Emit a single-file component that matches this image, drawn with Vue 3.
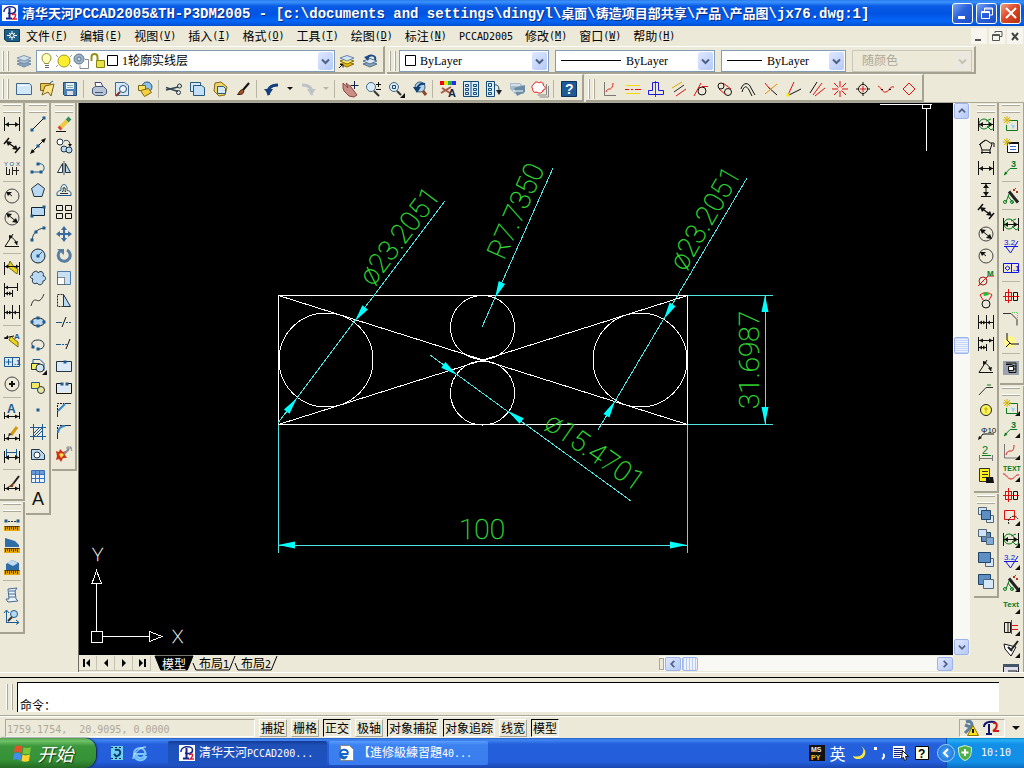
<script setup>
import { h } from 'vue'

// ---- small helpers for building icon markup ----
const s = (d, c = '#111', w = 1) => `<path d="${d}" fill="none" stroke="${c}" stroke-width="${w}"/>`
const f = (d, c = '#111') => `<path d="${d}" fill="${c}"/>`
const o = (d, fill, c = '#111') => `<path d="${d}" fill="${fill}" stroke="${c}"/>`
const dash = (markup, pattern = '2 1') => markup.replace('/>', ` stroke-dasharray="${pattern}"/>`)
const ci = (x, y, r, c = '#111', fill = 'none') => `<circle cx="${x}" cy="${y}" r="${r}" stroke="${c}" fill="${fill}"/>`
const el = (x, y, rx, ry, c, fill = 'none') => `<ellipse cx="${x}" cy="${y}" rx="${rx}" ry="${ry}" stroke="${c}" fill="${fill}"/>`
const tx = (x, y, z, t, c, w = 400) => `<text x="${x}" y="${y}" font-size="${z}" fill="${c}" font-weight="${w}" font-family="Liberation Sans, sans-serif">${t}</text>`
const B = '#1d5a92'
const L = '#b9d8f2'
const G = '#0a7a1e'
const R = '#e01010'
const corner = f('M17 12v5h-5z')
const dot = (x, y, c = B) => f(`M${x - 1.5} ${y - 1.5}h3v3h-3z`, c)
const dimH = (y = 8) => s(`M.5 1v14M15.500 1v14M1 ${y}.5h14`) + f(`M1 ${y}.5l4-2.500v5zM15 ${y}.5l-4-2.500v5z`)
const ruler = f('M0 11h16v5H0z', '#e5a80c') + s('M.5 11.500h15M1.500 12v3M3.500 12v2M5.500 12v3M7.500 12v2M9.500 12v3M11.500 12v2M13.500 12v3', '#5a3c00')
const leader3 = s('M1 15L7 8.500H14', G) + f('M1 15.500l1-4 2.500 2z', G) + tx(8, 7, 9, '3', G, 700)
const balloonDim = ci(6, 8, 5, G) + s('M.5 2v13M15.500 2v13M1 8.500h14') + s('M9 10l4 4 3-2M8 5l5-2', G) + f('M1 8.500l4-2.500v5zM15 8.500l-4-2.500v5z')
const rough = tx(1, 7, 8, '3.2', '#1414e0') + s('M1 8.500h14M3 9l4.500 6L15 3', '#1414e0')
const wand = s('M6 3.500l9 11', '#222', 3) + s('M6 6l-3 8M5 8l5 7', G) + ci(2, 14, 1.5, G) + ci(9, 14, 1.5, G) + f('M10 1h2v2h-2zM13 3h2v2h-2zM12 0h1v1h-1z', '#b03020')
const shaft = s('M0 8.500h16M5.500 1v14', R, 1) + s('M8.500 4v9M2.500 4v9M2 4.500h6M2 12.500h6', R) + s('M10.500 4.500h4v8h-4z')
const sparkPage = (c) => s('M6 4.500h8.500v10h-11V9', c, 1) + s('M4 0v8M0 4h8M1 1l6 6M7 1L1 7', '#d4b400') + f('M8 8l4 2-2 3z', '#8fd0ff')
const boxes = (a, b, c, order) => {
  const small = o('M.5 .5h8v7h-8z', a, '#567') + o('M8.500 8.500h7v7h-7z', c, '#567')
  const big = o('M3.500 3.500h9v9h-9z', b, '#246')
  return order ? big + small : small + big
}

const icons = {
  app: f('M0 0h16v16H0z', '#fff') + s('M2 7C1 1 13 0 13.500 4.500S9 9 6 8', '#16268c', 1.5) + s('M7.500 3v11M4 13.500h6', '#16268c', 2) + s('M10 10c4-3 5 1 1 4h4', '#d8203a', 1.5),
  doc: o('M.5 1.500h15v12H3l-2.500-2z', '#1d5f86', '#0b3a57') + s('M8 3v9M3 7.500h10M5 5l6 5M11 5l-6 5', '#fff') + ci(8, 7.5, 2, '#fff', '#1d5f86'),
  layers: o('M8 8.500l7 2.500-7 3-7-3z', '#8ba4bd', '#6f8aa6') + o('M8 5.500l7 2.500-7 3-7-3z', '#a9bdd0', '#6f8aa6') + o('M8 2.500l7 2.500-7 3-7-3z', '#d3dfe9', '#7d97b0'),
  layerGet: o('M8 8.500l7 2.500-7 3-7-3z', '#e3b70e', '#85700e') + o('M8 5.500l7 2.500-7 3-7-3z', '#ffe96a', '#85700e') + o('M8 2.500l7 2.500-7 3-7-3z', '#d3e6f6', '#6685a8') + s('M0 15l4-4M1 11.500h3v3'),
  layerPrev: o('M8 8.500l7 2.500-7 3-7-3z', '#8ba4bd', '#54728f') + o('M8 5.500l7 2.500-7 3-7-3z', '#dce7f1', '#54728f') + s('M13 7c2-5-6-6-8-2', '#1b4b86', 2) + f('M2 4l6-2-2 6z', '#1b4b86'),
  bulb: o('M5.500 10.500c0-2-2.500-2-2.500-5.500a4.500 4.500 0 0 1 9 0c0 3.500-2.500 3.500-2.500 5.500z', '#ffffb8', '#8d8d3b') + s('M6 12.500h4M6 14.500h4', '#667'),
  sun: ci(8, 8, 6, '#9a9a22', '#ffee2e') + s('M0 2l2 2M16 2l-2 2M0 14l2-2M16 14l-2-2', '#999'),
  vpsun: ci(6, 6, 5, '#60788e', '#9cb4c8') + ci(6, 6, 2, '#60788e', '#cddae4') + s('M12 6.500h3.500v9H7v-3', '#889'),
  lock: s('M1.500 8V4a3 3 0 0 1 6 0v4', '#93931a', 2) + o('M6.500 7.500h8v7h-8z', '#e8e04a', '#84840e'),
  swatch: o('M2.500 2.500h10v10h-10z', '#fff', '#000'),
  new: o('M.5 2.500h13l2 2v9h-15z', '#d2e8f8', '#42688f') + s('M2 4.500h10', '#fff'),
  open: o('M1.500 2.500h10l2 2v5h-12z', '#f1c54b', '#77611e') + o('M3 14l3-9 9-2-3 12-3-4z', '#ffe58a', '#77611e') + s('M11 2l3-2', '#2b5d8c'),
  save: o('M1.500 1.500h13v13h-12l-1-1z', '#4a82b4', '#234c75') + f('M4 2h8v6H4z', '#e6f0f8') + f('M5 10h6v4H5z', '#dde') + s('M5 4.500h6M5 6.500h6', '#8aa'),
  print: o('M5 6L4 1.500h6l2 4.500', '#fff', '#447') + o('M1.500 7.500l3-2h8l3 3v4l-3 2h-8l-3-2z', '#b8c4d4', '#445a78') + s('M4 11.500h8', '#445a78'),
  preview: o('M1.500 1.500h9l4 3v10h-13z', '#d4e8f8', '#42688f') + ci(9, 8, 3.5, '#2b4f74', '#eef7ff') + s('M6 11l-4 4', '#8a2e14', 2),
  publish: ci(10, 6, 5, '#27588c', '#8fc3e8') + o('M1.500 4.500h7v5h-7z', '#ffe45c', '#7b6718') + o('M3.500 9.500l8-2 3 4-7 4z', '#f5cf3f', '#7b6718'),
  cut: s('M0 6.500l12 4M0 9l12-3', '#345', 1.5) + ci(13.5, 5, 2, '#234') + ci(12.5, 11.5, 2, '#234'),
  copy: o('M1.500 1.500h10v9h-10z', '#d2e8f8', '#28587f') + o('M4.500 4.500h8l3 2v8h-11z', '#c3e0f6', '#28587f'),
  paste: o('M3 2l6-1 6 5-2 8-6 1-5-5z', '#f2d462', '#80691d') + o('M5.500 5.500h6l2 2v5h-8z', '#d2e8f8', '#28587f'),
  brush: s('M14 2L8 9', '#111', 2) + o('M8.500 8.500c-4 0-4 3-6 5 4 0 7 0 6-5z', '#a0522d', '#3b1c0a'),
  undo: s('M5 14c-3-6 2-10 9-10', '#123f7c', 3) + f('M0 8h9l-4 6z', '#123f7c'),
  redo: s('M11 14c3-6-2-10-9-10', '#bcc2c8', 3) + f('M16 8H7l4 6z', '#bcc2c8'),
  pan: o('M1 2l5 5-2-5 5 4 3 4 3 4-3 2-5-1-5-5-1-3z', '#c98f86', '#8a4640') + s('M12.500 0v8M8.500 4.500h8', '#124'),
  zoomrt: ci(6, 6, 4.5, '#4b6a88', '#d8ecfa') + s('M9 10l5 5', '#333', 2) + s('M11 3.500h5M13.500 1v5M11 8.500h5'),
  zoomwin: ci(6, 6, 4.5, '#4b6a88', '#d8ecfa') + s('M4.500 4.500h3v3h-3z', '#246') + s('M9 10l4 4', '#333', 2) + corner,
  zoomprev: ci(9, 6, 5, '#37597c', '#b4d2ea') + s('M12 10l3 4', '#8a4a2a', 3) + s('M14 3C10 2 7 4 6 8', '#103f74', 2) + f('M2 6h8l-4 6z', '#103f74'),
  props: f('M0 0h4v4H0z', '#e01') + f('M4 0h4v4H4z', '#f0e010') + f('M8 0h4v4H8z', '#20b040') + f('M12 0h4v4h-4z', '#2030e0') + s('M1 12l10-6M2 7l8 5', '#a55b48', 2) + tx(8, 16, 11, 'A', '#124', 700),
  dcenter: o('M.5 .5h15v15H.5z', '#dcecf8', '#124a78') + s('M8 1v14', '#124a78') + s('M2.500 3.500h3v2h-3zM2.500 7.500h3v2h-3zM2.500 11.500h3v2h-3zM10.500 3.500h3v2h-3zM10.500 7.500h3v2h-3zM10.500 11.500h3v2h-3z', '#124a78'),
  palettes: o('M.5 .5h8v15h-8z', '#dcecf8', '#124a78') + s('M2.500 2.500h3v3h-3zM2.500 7.500h3v2h-3zM2.500 11.500h3v2h-3zM8 4c5-1 5 3 5 7', '#124a78') + f('M10 9h6l-3 5z', '#223'),
  sheet: f('M1 2h10l4 4v7H6L1 8z', '#a9bccb') + f('M5 7l11-3v7l-8 4z', '#6b8ca6') + s('M2 4h9M4 10h10', '#fff'),
  markup: s('M14.500 3v11h-9M16.500 5v11h-9', '#888') + o('M2 3c1-3 4-2 5-1 2-2 5 0 4 2 3 1 3 5 0 5 0 3-4 4-6 2-3 1-5-1-4-3-2-1-1-4 1-5z', '#fff', R),
  help: o('M.5 .5h15v15H.5z', '#1e5a96', '#0d335c') + tx(4, 13, 14, '?', '#fff', 700),
  pl: s('M2.500 1v13.500H14', '#777') + s('M4 11c1-3 3-3 4-3s3-2 3-6', R),
  centerl: s('M1 4.500h14M1 12.500h14', '#f5d800') + s('M0 8.500h4M6 8.500h2M10 8.500h6', R),
  sym: s('M7.500 0v16', R) + s('M4.500 1.500h6v8h5v4H.5v-4h4z', '#1a1ad8'),
  parl: s('M1 7L11 1', '#e0a800') + s('M3 11l10-7', '#222') + s('M5 15l10-7', R),
  tang: ci(8, 10, 4, '#111') + s('M0 15L7 2M8 5.500h6', R),
  link2: ci(4, 5, 3) + ci(11, 11, 3.5) + s('M6 2l8 6M2 8l7 6', R),
  arc2: s('M1 8c2-7 8-7 10-1l4 7M2 11c2-7 5-6 7-2l3 6'),
  cross: s('M5 6l9 8', '#111') + s('M2 13L14 3', '#e38b00') + s('M2 2l4 5', R),
  ang: s('M2 14L8 1', R) + s('M3 14l12-6') + dot(2, 14, '#ee0'),
  fan: s('M1 12L8 1') + s('M4 14L13 2M6 15l10-8', R),
  star: s('M8 0v6M8 10v6M0 8h6M10 8h6M2 2l4.500 4.500M14 2L9.500 6.500M2 14l4.500-4.500M14 14L9.500 9.500', R),
  target: ci(8, 8, 4.5) + s('M8 1v3M8 12v3M1 8h3M12 8h3', '#111') + s('M8 5v6M5 8h6', R),
  wave: s('M0 5c3 1 4 7 8 6s3-6 8-5', R) + f('M3 8h2v1H3zM11 8h2v1h-2z'),
  diamond: s('M8 2l6 6-6 6-6-6z', R),

  dlin: dimH(),
  dali: s('M5 0L0 6M16 9l-5 6M3 4l10 7', '#111', 1.5) + f('M2 3l6 1-4 4zM14 12l-6-1 4-4z'),
  dord: s('M2.500 7v8M2 14.500h3M5.500 9v6M8.500 7v8M8 10.500h7M12.500 7v8', '#222') + tx(0, 6, 6, 'Y O X', '#1a4fa0'),
  drad: ci(8, 8, 7, '#444') + s('M8 8L3 4') + f('M2 4l6 0-4 4z'),
  ddia: ci(8, 8, 7, '#444') + s('M3 4l10 8') + f('M2 3l6 1-4 4zM14 13l-6-1 4-4z'),
  dang: s('M15 14.500H1L9 2M6 5c4 1 6 4 7 8') + f('M9 4l-4-1v4zM13 13l-3-3 4-1z'),
  qdim: o('M6 1l-2 6 9 7 1-5-4-2z', '#e8d21a', '#77691a') + s('M.5 2v13M15.500 2v13M1 6.500h14') + f('M1 6.500l3-2v4zM15 6.500l-3-2v4z'),
  dbase: s('M.5 1v14M8.500 8v7M13.500 1v8M1 5.500h12M1 11.500h8') + f('M1 11.500l3-2v4zM8 11.500l-3-2v4zM1 5.500l3-2v4z'),
  dcont: s('M.5 1v14M8.500 1v14M15.500 1v14M1 8.500h14') + f('M1 8.500l3-2v4zM8 8.500l-3-2v4zM9 8.500l3-2v4z'),
  qlead: o('M7 4l-2 4 9 7v-5l-3-2z', '#efd614', '#77691a') + s('M0 6l10-2') + f('M0 7l4-4v4z') + tx(10, 7, 8, 'A', B, 700),
  tol: o('M.5 3.500h15v9H.5z', '#d6eaf9', B) + s('M8.500 4v9M1.500 8h6M4.500 5v6', B) + tx(10, 11, 8, '.1', B, 700),
  cmark: ci(8, 8, 7, '#444') + s('M8 5v6M5 8h6', '#111', 2),
  dimA: tx(3, 9, 12, 'A', B, 700) + s('M.5 8v7M15.500 8v7M1 12.500h14') + f('M1 12.500l4-2v4zM15 12.500l-4-2v4z'),
  dimpen: s('M13 1L7 9', '#d69a10', 3) + f('M8 8l-4 3 1-4z', '#333') + s('M.5 8v7M15.500 8v7M1 12.500h14') + f('M1 12.500l4-2v4zM15 12.500l-4-2v4z'),
  dimup: s('M2.500 1v9M12.500 1v9M3 4.500h10', B) + s('M.5 3v12M15.500 3v12M1 9.500h14') + f('M1 9.500l4-2.500v5zM15 9.500l-4-2.500v5z'),
  dimsty: s('M15 0L9 8', '#222', 2) + f('M10 6L4 11h5z', '#7a3f1c') + s('M.5 8v7M15.500 8v7M1 12.500h14') + f('M1 12.500l4-2v4zM15 12.500l-4-2v4z'),
  dist: dot(2, 6) + dot(14, 6) + dash(s('M4 6.500h8', '#333')) + ruler,
  area: f('M1 1l10 3 4 4v2H1z', '#2e6da6') + ruler,
  mass: f('M2 5l6-4 7 3v7H2z', '#2e6da6') + f('M3 4l5-3 6 3-5 3z', '#bfdcf2') + ruler,
  list: o('M4 2l9-1-2 3 1 8 2 2-10 1-2-3h3z', '#eaf3fa', '#456a94') + s('M5 4h6M5 7h6M5 10h6', '#456a94'),
  idp: s('M2.500 2v12M2 13.500h13M0 4l2.500-3L5 4M12 11l3 2.500-3 2', B) + ci(10, 5, 3.5, B, L) + s('M8 8l-4 4', '#333', 2),

  line: s('M3 13L13 3') + dot(2, 14) + dot(14, 2),
  cline: s('M2 14L14 2', '#111') + f('M0 16l2-5 3 3zM16 0l-5 2 3 3z') + dot(8, 8),
  pline: s('M2 12h8M8 4c7-2 8 7 3 8', B) + dot(2, 12) + dot(11, 12) + dot(8, 4),
  polygon: o('M8 1.500l6.500 5-2.500 8H4L1.500 6.500z', L, '#234'),
  rect: o('M1.500 3.500h13v8h-13z', L, '#123') + dot(2, 12) + dot(14, 3),
  arc: s('M2 14C3 7 7 3 14 2', '#234') + dot(2, 14) + dot(6, 6) + dot(14, 2),
  circle: ci(8, 8, 7, '#123', L) + s('M8 8l4-4', B) + dot(8, 8),
  cloud: o('M4 2c3-2 4 0 4 1 2-3 7-1 5 3 4 0 3 5 0 5 0 4-4 5-6 2-3 2-6-1-4-4-4-1-3-4 0-4-1-1-1-2 1-3z', L, '#234'),
  spline: s('M1 14C5 0 8 17 14 2', '#333'),
  ellipse: el(8, 8, 6.5, 4, '#111', L) + dot(2, 8) + dot(14, 8) + dot(8, 4) + dot(8, 12),
  earc: s('M8 13c8 1 8-9 0-9-7 0-7 5-5 6', '#234') + dot(3, 11) + dot(8, 13),
  insblk: o('M1.500 5.500h8v6h-8z', '#f0f060', '#234') + s('M3 5V1.500h7l4 4v7', B) + ci(10, 10, 4, '#333', '#cfe4f5') + corner,
  mkblk: o('M1.500 2.500h8v6h-8z', '#f0e860', B) + ci(11, 10, 3.5, '#333', '#dfe8a0'),
  point: dot(8, 8),
  hatch: s('M3.500 0v16M12.500 0v16M0 3.500h16M0 12.500h16', B) + s('M4 9l5-5M4 12l8-8M7 12l5-5', B),
  region: o('M1.500 13.500v-10h8l5 5v5z', L, '#234') + ci(7, 9, 3, '#234', '#fff'),
  table: o('M1.500 2.500h13v12h-13z', '#e9f3fc', '#3a70b8') + f('M2 3h12v3H2z', '#6a9ad8') + s('M5.500 3v12M9.500 3v12M2 6.500h12M2 10.500h12', '#3a70b8'),
  mtext: tx(2, 15, 18, 'A', '#111'),

  erase: s('M14 2L11 5', '#3a8a5a', 4) + s('M11 5L5 11', '#f0c83c', 4) + s('M5 11l-2 2', '#d8453a', 4) + s('M0 15.500h10'),
  cpobj: ci(4, 4, 3, '#234', '#fff') + ci(8, 11, 3, '#234', L) + ci(13, 12, 3, '#234', L) + s('M8 3c4-2 6 1 6 4', '#234') + f('M12 6h4l-2 3z'),
  mirror: s('M8 1v14', '#456') + o('M6.500 3.500v9h-5z', '#fff', '#234') + o('M9.500 3.500v9h5z', L, '#234'),
  offset: s('M1 13.500h14v-2c0-2-2-3-4-3 1-8-7-8-6 0-2 0-4 1-4 3z', B) + s('M4 11.500h8M6 9.500h1c1-1-1-4 1-4s1 3 1 4h1', '#234'),
  array: s('M.5 1.500h6v5h-6zM9.500 1.500h6v5h-6zM.5 9.500h6v5h-6zM9.500 9.500h6v5h-6z', '#111'),
  move: s('M8 2v12M2 8h12', '#3c6a9c', 2) + f('M8 0l3 4H5zM8 16l3-4H5zM0 8l4-3v6zM16 8l-4-3v6z', '#3c6a9c'),
  rotate: s('M4 3a6 6 0 1 0 7-1', '#5a7da0', 3) + f('M1 1h7v6z', '#5a7da0'),
  scale: o('M1.500 1.500h13v13h-13z', '#c9e0f4', '#4a7aa8') + dash(o('M1.500 7.500h7v7h-7z', '#fff', '#222'), '1 1'),
  stretch: dash(s('M1.500 2.500h6v12h-6z', '#222')) + o('M7.500 2.500l7 12h-7z', L, '#234'),
  trim: s('M0 8.500h6', B) + s('M6 13l4-10') + dash(s('M10 8.500h6', B)),
  extend: s('M0 8.500h5', B) + dash(s('M6 8.500h5', B)) + s('M10 13l4-10'),
  breakp: o('M.5 3.500h15v10H.5z', '#dbeaf6', '#234') + dot(9, 4),
  breaks: s('M5 3.500H.5v10h15v-10H11') + f('M2 5h12v7H2z', '#dbeaf6') + dot(6, 4) + dot(11, 4),
  chamfer: dash(s('M1.500 8V1.500H8')) + s('M1.500 15V9L9 1.500h6', '#234') + s('M2 9l7-7', '#3a88c8', 2),
  fillet: dash(s('M1.500 8V1.500H8')) + s('M1.500 15V9C2 4 5 2 9 1.500h6', '#234') + s('M2 9c0-4 3-7 7-7', '#3a88c8', 2),
  explode: f('M0 5l3 1 1-3 3 3 3-1-1 4 2 3-4 0-2 4-2-3-3 1 1-4z', '#cc3216') + f('M3 8l3-1 2 2-3 3z', '#ffd84a') + s('M8 8l5-5', '#888', 2) + s('M12 0v5M10 2h6M14 0l2 5', '#889'),

  bdim: balloonDim,
  polydim: s('M8 2l6 4-2 6H4L2 6zM1 7l6-5M13 5h3v4M3 14.500h10M4 12v4M12 12v4'),
  vdim: s('M3 1.500h10M3 14.500h10M8 2v12') + f('M8 2l3 4H5zM8 14l3-4H5z'),
  dimM: ci(5, 11, 4, '#902020') + s('M0 16L10 6h6', R) + tx(9, 6, 8, 'M', G, 700),
  arcdim: ci(8, 12, 4) + s('M2 3c3-3 9-3 12 0M2 3l3 5M14 3l-3 5', R) + f('M5 1l4-1 2 3-5 1z', '#18c030'),
  dbase2: s('M.5 1v14M15.500 1v14M8.500 8v7M1 4.500h14M1 11.500h8') + f('M1 4.500l4-2v4zM15 4.500l-4-2v4zM1 11.500l3-2v4zM8 11.500l-3-2v4z'),
  leader: s('M1 15L8 7.500h7', '#333') + s('M9 5h4', G),
  yball: ci(8, 8, 5.5, '#222', '#f8f45c') + s('M6 7h4M8 5v6', '#c9a800'),
  phi10: tx(3, 9, 8, 'Φ10', '#111') + s('M1 15l4-5h11') + f('M0 16l1-4 3 2z'),
  p2: tx(4, 8, 11, '2', G) + s('M1.500 9v6M14.500 9v6M2 12.500h12', '#777') + s('M4 9.500h9', G),
  binoc: o('M1.500 .5h10v13h-10z', '#ffee20', '#332') + s('M4 3.500h6M4 6.500h6M4 9.500h4', '#332') + f('M8 9h3v3h1V9h3l1 6H8z'),
  ord1: boxes('#cde3f7', '#5d8fc4', '#dbeafa', false),
  ord2: boxes('#cde3f7', '#5d8fc4', '#7fa9d6', true),
  ord3: o('M7.500 7.500h8v8h-8z', '#d5e7f8', '#567') + o('M.5 1.500h12v10H.5z', '#5d8fc4', '#246'),
  ord4: o('M.5 1.500h12v10H.5z', '#5d8fc4', '#246') + o('M5.500 6.500h10v9h-10z', '#d5e7f8', '#567'),

  newpart: sparkPage(G),
  newlist: o('M4.500 4.500h11v10h-11z', '#fff', '#111') + f('M5 4h11v2H5z') + s('M7 8.500h6M7 11.500h6', '#36c') + s('M4 0v8M0 4h8M1 1l6 6M7 1L1 7', '#d4b400'),
  lead3: leader3,
  wand,
  rough,
  tolb: s('M.5 3.500h15v9H.5zM8.500 4v9M4.500 6l2.500 2-2.500 2.500L2 8z', '#1414e0') + tx(10, 11, 8, '.1', '#1414e0', 700),
  shaft,
  chamf: s('M0 3.500h8l6 6v6', '#333') + dash(s('M9 2.500h5M14.500 3v5', '#5c5'), '1 1'),
  weld: ci(7, 10, 6, 'none', '#fff68a') + s('M4 1v7l4 4h8M7 11l-4 4'),
  gear: f('M0 1h16v14H0z', '#9aa3ad') + s('M3 4.500h5l5 2v6H6v-3M6 9h7M3 3h10v4', '#111') + o('M5.500 6.500h5v4h-5z', '#fff'),
  newpartc: sparkPage(G) + corner,
  lead3c: leader3 + corner,
  plc: s('M1.500 1v14h13', '#777') + s('M3 12c1-4 3-4 5-4s3-2 3-6', R) + corner,
  textw: tx(0, 6, 7, 'TEXT', G, 700) + s('M0 9c3-1 4 5 8 5s4-5 8-4', R) + corner,
  redbox: s('M1.500 1.500h10v9h-10z', R) + dash(s('M6 15c-3-6 6-11 9-5')) + corner,
  bdimc: balloonDim + corner,
  roughc: rough + corner,
  wandc: wand + corner,
  text: tx(0, 10, 8, 'Text', G, 700) + corner,
  bolt: s('M1.500 3.500h6v10h-6zM5 3v11') + s('M8.500 1v14M8 6.500h7M8 10.500h7', R) + corner,
  tag: o('M1 3l4 1 8 2-5 9-6-7z', '#fff') + s('M15 0L8 9M5 6l4 4', '#222', 2) + corner,
  win: o('M.5 1.500h15v13H.5z', '#dde', '#223') + f('M0 1h16v3H0z', '#456') + s('M5 8h9v5'),

  flag: f('M2 2c3-1 5-1 7 1L8 9C6 7 3 7 1 8z', '#e8502a') + f('M10 3c2 1 4 1 7 0l-1 6c-2 1-5 1-7 0z', '#7cc43a') + f('M1 9c2-1 5-1 7 1l-1 6c-2-2-5-2-7-1z', '#3f8ef0') + f('M9 10c2 1 4 1 7 0l-1 6c-2 1-5 1-7 0z', '#ffd22e'),
  desk: f('M2 1h12v14H2z', '#6fd0f0') + dash(s('M2 2.500h12M2 13.500h12', '#123'), '2 2') + s('M6 5c6-2 7 5 2 6M5 9l3 3', '#0a3c78', 2),
  ie: s('M13.500 9H4c1 5 6 5 8 2l2 1c-4 6-12 3-12-3s9-9 11.500-1z', '#7cc8ff', 2) + s('M1 14C0 10 9 1 14 2', '#d8f0ff'),
  iepage: o('M2.500 .5h9l4 4v11h-13z', '#fff', '#888') + s('M10.500 9H3c1 4 5 4 6 2M10 8c-1-5-8-4-8 1 0 4 3 5 6 4', '#1464c8', 2),
  mspy: f('M0 0h16v16H0z', '#111') + tx(2, 7, 7, 'MS', '#eee', 700) + tx(2, 15, 7, 'PY', '#ffc02a', 700),
  moon: f('M10 1c5 4 2 13-8 10 0 1 2 3 4 3 8 1 12-8 4-13z', '#ffe93a'),
  punct: f('M2 2h3v3H2z', '#fff') + s('M11 9c2 1 1 4-1 5', '#fff', 2),
  softkb: f('M0 1h12v12H0z', '#fff') + s('M1 3.500h9M1 5.500h9M1 7.500h9M1 9.500h9M1 11.500h6', '#14207a') + o('M9.500 5.500l6 6h-3l1 3-2 1-1-3-2 1z', '#fff'),
  imhelp: o('M1.500 1.500h13v13h-13z', '#ffffe6', '#000') + tx(4, 13, 12, '?', '#000', 700),
  shield: o('M8 .5l6.500 2c0 7-1 11-6.500 13C2.500 13.500 1.500 9.500 1.500 2.500z', '#4fb04a', '#d8f0c8') + s('M8 4v7M4.500 7.500h7', '#fff', 2),
  comm: s('M3 2c5-2 8 2 4 6l-5 5M2 5l8 3', '#5d7f9c', 3) + o('M10 5.500l5.500 10h-11z', '#ffe21a', '#8a7400') + s('M10 9v4', '#111', 2),
  pcc: s('M1 7C1 1 10 1 13 3', '#10186c', 2) + s('M6 4v10M3 14h6', '#10186c', 2) + s('M10 3c6-1 4 6 0 8h6', '#d01818', 2)
}

const Icon = (p) => h('svg', { class: 'icon', viewBox: '0 0 16 16', width: 16, height: 16, 'aria-hidden': 'true', innerHTML: icons[p.n] })
Icon.props = ['n']

// Latin runs are set smaller than the Chinese around them so that two letters span one ideograph.
const Mix = (p) => h('span', { class: 'mix' }, (p.t.match(/[\x20-\x7e]+|[^\x20-\x7e]+/g) || []).map((r) =>
  h('span', { class: /^[\x20-\x7e]/.test(r) ? 'lat' : 'han' }, r)))
Mix.props = ['t']

const title = '清华天河PCCAD2005&TH-P3DM2005 - [c:\\documents and settings\\dingyl\\桌面\\铸造项目部共享\\产品\\产品图\\jx76.dwg:1]'
const menus = [['文件', 'F'], ['编辑', 'E'], ['视图', 'V'], ['插入', 'I'], ['格式', 'O'], ['工具', 'T'], ['绘图', 'D'], ['标注', 'N'], ['PCCAD2005', ''], ['修改', 'M'], ['窗口', 'W'], ['帮助', 'H']]

const std = 'new open save | print preview publish | cut copy paste brush | undo v redo w | pan zoomrt zoomwin zoomprev | props dcenter palettes sheet markup | help'.split(' ')
const pcTools = 'pl centerl sym parl tang link2 arc2 cross ang fan star target wave diamond'.split(' ')

const leftBars = [
  ['dlin dali dord | drad ddia dang | qdim dbase dcont | qlead tol cmark | dimA dimpen dimup | dimsty', 'dist area mass | list idp'],
  ['line cline pline polygon rect arc circle cloud spline ellipse earc insblk mkblk point hatch region table mtext'],
  ['erase cpobj mirror offset array move rotate scale stretch trim extend breakp breaks chamfer fillet explode']
]
const rightBars = [
  ['bdim polydim dlin vdim dali ddia drad dimM arcdim dcont dbase2 dang leader yball phi10 p2 binoc', 'ord1 ord2 ord3 ord4'],
  ['newpart newlist lead3 | wand | bdim rough tolb | shaft chamf weld | gear', 'newpartc lead3c plc textw shaft redbox bdimc roughc wandc text bolt tag win']
]

const modes = [['捕捉', 0], ['栅格', 0], ['正交', 1], ['极轴', 0], ['对象捕捉', 1], ['对象追踪', 1], ['线宽', 0], ['模型', 1]]

// Arrowhead polygon: tip at (x, y), body trailing towards (tx, ty).
const arrow = (x, y, tx2, ty2) => {
  const len = Math.hypot(tx2 - x, ty2 - y)
  const ux = (tx2 - x) / len
  const uy = (ty2 - y) / len
  const bx = x + ux * 17
  const by = y + uy * 17
  return `${x},${y} ${bx - uy * 3.5},${by + ux * 3.5} ${bx + uy * 3.5},${by - ux * 3.5}`
}
const arrows = [
  arrow(355, 321, 445, 201), arrow(297, 398, 278, 423), arrow(495, 298, 553, 168),
  arrow(664, 319, 747, 178), arrow(615, 401, 598, 430), arrow(457, 375, 430, 355), arrow(508, 411, 631, 501),
  arrow(278, 545, 300, 545), arrow(687, 545, 600, 545), arrow(765, 295, 765, 330), arrow(765, 424, 765, 400)
]
const dims = [
  { x: 373, y: 287, a: -53, t: 'ø23.2051' },
  { x: 504, y: 261, a: -66, t: 'R7.7350' },
  { x: 685, y: 272, a: -60, t: 'ø23.2051' },
  { x: 543, y: 427, a: 35, t: 'ø15.4701' },
  { x: 759, y: 409, a: -90, t: '31.6987' },
  { x: 459, y: 539, a: 0, t: '100' }
]
</script>

<template>
  <div class="app">
    <header class="title">
      <Icon n="app" />
      <h1><Mix :t="title" /></h1>
      <div class="winbtns">
        <button aria-label="最小化"><svg viewBox="0 0 20 20"><path d="M5 13h7v3H5z" fill="#fff" /></svg></button>
        <button aria-label="还原"><svg viewBox="0 0 20 20"><path d="M7.500 8V5h8v7h-3M4.500 8.500h8v7h-8zM4 9.500h9M7 6h9" fill="none" stroke="#fff" /></svg></button>
        <button class="close" aria-label="关闭"><svg viewBox="0 0 20 20"><path d="M5 5l10 10M15 5L5 15" stroke="#fff" stroke-width="2" /></svg></button>
      </div>
    </header>

    <nav class="menubar">
      <Icon n="doc" />
      <button v-for="m in menus" :key="m[0]"><Mix :t="m[0]" /><span v-if="m[1]" class="key">(<u>{{ m[1] }}</u>)</span></button>
      <div class="mdi">
        <button aria-label="最小化窗口"><svg viewBox="0 0 16 16"><path d="M4 11h6v2H4z" fill="#555" /></svg></button>
        <button aria-label="还原窗口"><svg viewBox="0 0 16 16"><path d="M6 5V3.500h7v5h-2M3.500 6.500h7v6h-7zM3 7.500h8" fill="none" stroke="#555" /></svg></button>
        <button aria-label="关闭窗口"><svg viewBox="0 0 16 16"><path d="M5 5l6 7M11 5l-6 7" stroke="#444" stroke-width="2" /></svg></button>
      </div>
    </nav>

    <div class="bars">
      <div class="bar">
        <i class="grip"></i>
        <button class="tool" aria-label="图层管理"><Icon n="layers" /></button>
        <div class="combo layer">
          <Icon n="bulb" /><Icon n="sun" /><Icon n="vpsun" /><Icon n="lock" /><Icon class="sw" n="swatch" />
          <select aria-label="图层"><option>1轮廓实线层</option></select>
          <svg class="drop" viewBox="0 0 15 17"><path d="M4 7l3.500 3.500L11 7" /></svg>
        </div>
        <button class="tool" aria-label="置为当前图层"><Icon n="layerGet" /></button>
        <button class="tool" aria-label="上一个图层"><Icon n="layerPrev" /></button>
      </div>
      <div class="bar">
        <i class="grip"></i>
        <div class="combo c1">
          <Icon n="swatch" />
          <select aria-label="颜色"><option>ByLayer</option></select>
          <svg class="drop" viewBox="0 0 15 17"><path d="M4 7l3.500 3.500L11 7" /></svg>
        </div>
        <div class="combo c2">
          <i class="ltype"></i>
          <select aria-label="线型"><option>ByLayer</option></select>
          <svg class="drop" viewBox="0 0 15 17"><path d="M4 7l3.500 3.500L11 7" /></svg>
        </div>
        <div class="combo c3">
          <i class="ltype short"></i>
          <select aria-label="线宽"><option>ByLayer</option></select>
          <svg class="drop" viewBox="0 0 15 17"><path d="M4 7l3.500 3.500L11 7" /></svg>
        </div>
        <div class="combo c4 off">
          <select aria-label="打印样式" disabled><option>随颜色</option></select>
          <svg class="drop" viewBox="0 0 15 17"><path d="M4 7l3.500 3.500L11 7" /></svg>
        </div>
      </div>
    </div>
    <div class="bars">
      <div class="bar">
        <i class="grip"></i>
        <template v-for="(n, i) in std" :key="i">
          <i v-if="n === '|'" class="sep"></i>
          <button v-else-if="n === 'v' || n === 'w'" class="caret" :class="{ dim: n === 'w' }" aria-label="更多"></button>
          <button v-else class="tool" :aria-label="n"><Icon :n="n" /></button>
        </template>
      </div>
      <div class="bar">
        <i class="grip"></i>
        <button v-for="n in pcTools" :key="n" class="tool" :aria-label="n"><Icon :n="n" /></button>
      </div>
    </div>

    <main>
      <div v-for="(col, c) in leftBars" :key="'l' + c" class="vcol">
        <div v-for="(g, k) in col" :key="k" class="vbar">
          <i class="vgrip"></i>
          <template v-for="(n, i) in g.split(' ')" :key="i">
            <i v-if="n === '|'" class="vsep"></i>
            <button v-else class="vtool" :aria-label="n"><Icon :n="n" /></button>
          </template>
        </div>
      </div>

      <section class="work">
        <div class="view">
          <svg class="drawing" viewBox="79 103 874 552" preserveAspectRatio="xMinYMin slice">
            <g fill="none" stroke="#fff" shape-rendering="crispEdges">
              <path d="M278.500 295.500H687.500V424.500H278.500zL687.500 424.500M278.500 424.500L687.500 295.500" />
              <circle cx="326" cy="360" r="47" /><circle cx="640" cy="360" r="47" />
              <circle cx="482.500" cy="327.500" r="32" /><circle cx="482.500" cy="393" r="32" />
              <path d="M91.500 631.500h11v11h-11zM96.500 631V583M92 583.500L96.500 570.500L101.500 583.500zM102 636.500H149M149.500 631.500L162 636.500L149.500 641.500z" />
              <path d="M880 104.500H932M926.500 108V151M922.500 104v4h8v-4" />
            </g>
            <g fill="none" stroke="#4fe3e3" shape-rendering="crispEdges">
              <path d="M445 201L278 423M553 168L482 327M747 178L598 430M430 355L631 501" />
              <path d="M278.500 425V553M687.500 425V553M279 545.500H687M688 295.500H773M688 424.500H773M765.500 296V424" />
            </g>
            <polygon v-for="a in arrows" :key="a" :points="a" fill="#0ff" />
            <g class="dimtext">
              <text v-for="d in dims" :key="d.x" :transform="`translate(${d.x} ${d.y}) rotate(${d.a})`">{{ d.t }}</text>
            </g>
            <g class="axis"><text x="92" y="561">Y</text><text x="172" y="643">X</text></g>
          </svg>
          <div class="vscroll">
            <button aria-label="向上"><svg viewBox="0 0 16 16"><path d="M4.500 9.500L8 6l3.500 3.500" /></svg></button>
            <i class="thumb"></i>
            <button aria-label="向下"><svg viewBox="0 0 16 16"><path d="M4.500 6.500L8 10l3.500-3.500" /></svg></button>
          </div>
        </div>
        <div class="tabrow">
          <button class="nav" aria-label="第一个"><svg viewBox="0 0 16 14"><path d="M3 3h2v8H3zM10 3v8L6 7z" /></svg></button>
          <button class="nav" aria-label="上一个"><svg viewBox="0 0 16 14"><path d="M10 3v8L6 7z" /></svg></button>
          <button class="nav" aria-label="下一个"><svg viewBox="0 0 16 14"><path d="M6 3v8l4-4z" /></svg></button>
          <button class="nav" aria-label="最后一个"><svg viewBox="0 0 16 14"><path d="M5 3v8l4-4zM10 3h2v8h-2z" /></svg></button>
          <div class="tabs">
            <button class="tab on"><svg viewBox="0 0 40 15" preserveAspectRatio="none"><path d="M0 0l6 14h28l6-14z" /></svg><Mix t="模型" /></button>
            <button class="tab"><svg viewBox="0 0 44 15" preserveAspectRatio="none"><path d="M0 7l3 7h35l6-14" /></svg><Mix t="布局1" /></button>
            <button class="tab"><svg viewBox="0 0 44 15" preserveAspectRatio="none"><path d="M0 7l3 7h35l6-14" /></svg><Mix t="布局2" /></button>
          </div>
          <div class="hscroll">
            <i class="split"></i>
            <button aria-label="向左"><svg viewBox="0 0 16 16"><path d="M9.500 4.500L6 8l3.500 3.500" /></svg></button>
            <i class="thumb"></i>
            <span class="space"></span>
            <button aria-label="向右"><svg viewBox="0 0 16 16"><path d="M6.500 4.500L10 8l-3.500 3.500" /></svg></button>
          </div>
        </div>
      </section>

      <div v-for="(col, c) in rightBars" :key="'r' + c" class="vcol right">
        <div v-for="(g, k) in col" :key="k" class="vbar">
          <i class="vgrip"></i>
          <template v-for="(n, i) in g.split(' ')" :key="i">
            <i v-if="n === '|'" class="vsep"></i>
            <button v-else class="vtool" :aria-label="n"><Icon :n="n" /></button>
          </template>
        </div>
      </div>
    </main>

    <section class="command">
      <i class="grip"></i>
      <div class="cmdbox"><label for="cmd">命令：</label><input id="cmd" type="text" autocomplete="off"></div>
    </section>

    <footer class="status">
      <output class="coords"><Mix t="1759.1754,  20.9095, 0.0000" /></output>
      <button v-for="m in modes" :key="m[0]" :class="{ down: m[1] }">{{ m[0] }}</button>
      <div class="notify"><Icon n="comm" /><Icon n="pcc" /></div>
      <button class="caret" aria-label="状态栏菜单"></button>
    </footer>

    <div class="taskbar">
      <button class="start"><svg class="flag" viewBox="0 0 17 17" aria-hidden="true" v-html="icons.flag"></svg><em>开始</em></button>
      <div class="quick">
        <button aria-label="显示桌面"><Icon n="desk" /></button>
        <button aria-label="浏览器"><Icon n="ie" /></button>
      </div>
      <button class="task active"><Icon n="app" /><Mix t="清华天河PCCAD200..." /></button>
      <button class="task"><Icon n="iepage" /><Mix t="【進修級練習題40..." /></button>
      <div class="ime">
        <button aria-label="输入法"><Icon n="mspy" /></button>
        <button class="ying">英</button>
        <button aria-label="半角"><Icon n="moon" /></button>
        <button aria-label="标点"><Icon n="punct" /></button>
        <button aria-label="功能菜单"><Icon n="softkb" /></button>
        <button aria-label="帮助"><Icon n="imhelp" /></button>
      </div>
      <div class="tray">
        <button class="chev" aria-label="显示隐藏的图标"><svg viewBox="0 0 18 18"><path d="M11 5L7 9l4 4" /></svg></button>
        <Icon n="shield" />
        <time>10:10</time>
      </div>
    </div>
  </div>
</template>

<style>
body { margin: 0; background: #ece9d8; }
.mix { white-space: pre; }
.mix .lat { font-family: "DejaVu Sans Mono", "Liberation Mono", monospace; font-size: 10px; }
h1 .mix .lat { font-family: "Liberation Mono", monospace; font-size: 14px; }
</style>

<style scoped>
.app { height: 100vh; display: flex; flex-direction: column; overflow: hidden; background: #ece9d8; color: #000; font: 12px/16px "Liberation Serif", "Noto Sans CJK SC", serif; }
.app * { box-sizing: border-box; }
button { border: 0; padding: 0; margin: 0; background: none; color: inherit; font: inherit; display: flex; align-items: center; justify-content: center; }
i { display: block; flex: none; }
.icon { display: block; flex: none; width: 16px; height: 16px; overflow: visible; }

.title { flex: none; height: 26px; display: flex; align-items: center; padding: 0 3px 0 2px; background: linear-gradient(#2a7bea 0, #3a93ff 2px, #0a5be4 6px, #0054e3 14px, #0566f7 21px, #0350d0 26px); color: #fff; }
.title h1 { margin: 0 0 0 4px; flex: 1; overflow: hidden; white-space: nowrap; font: bold 13px/22px "Noto Sans CJK SC", sans-serif; text-shadow: 1px 1px #0a2a80; }
.winbtns { display: flex; gap: 3px; }
.winbtns button { width: 21px; height: 21px; border: 1px solid #fff; border-radius: 3px; background: linear-gradient(135deg, #7aa5f5, #2a62dc 45%, #1c4fc4); }
.winbtns svg { width: 20px; height: 20px; flex: none; }
.winbtns .close { background: linear-gradient(135deg, #f0a088, #dc4a28 45%, #b8300f); }

.menubar { flex: none; height: 20px; display: flex; align-items: center; padding-left: 4px; }
.menubar > button { height: 20px; padding: 0 6px; white-space: nowrap; font-family: "Noto Sans CJK SC", sans-serif; }
.menubar .key { font: 10px/16px "DejaVu Sans Mono", monospace; }
.mdi { margin-left: auto; display: flex; gap: 2px; padding-right: 1px; }
.mdi button { width: 16px; height: 16px; background: #f6f5ee; }
.mdi svg { width: 16px; height: 16px; }

.bars { flex: none; display: flex; height: 28px; }
.bar { display: flex; align-items: center; height: 28px; padding: 2px 2px 0; margin-right: 2px; border: solid #a5a292; border-width: 1px 2px 2px 0; border-top-color: #fff; }
.grip { width: 6px; height: 20px; margin-right: 4px; border: solid #fff; border-width: 0 1px; box-shadow: 1px 0 #aca899, inset 1px 0 #aca899; }
.tool { width: 23px; height: 22px; flex: none; }
.sep { width: 1px; height: 18px; margin: 0 3px 0 2px; background: #b8b5a5; }
.caret { width: 13px; height: 22px; }
.caret::before { content: ""; border: 3px solid transparent; border-top-color: #111; border-bottom: 0; }
.caret.dim::before { border-top-color: #b9b6a8; }
.combo { display: flex; align-items: center; height: 22px; padding: 1px; border: 1px solid #7f9db9; background: #fff; margin-right: 6px; }
.combo select { flex: 1; min-width: 0; height: 18px; padding: 0 3px; border: 0; margin: 0; background: transparent; color: #000; font: 12px/18px "Liberation Serif", "Noto Sans CJK SC", serif; appearance: none; outline: 0; opacity: 1; }
.drop { width: 15px; height: 18px; flex: none; border-radius: 2px; background: linear-gradient(135deg, #dfe8ff, #b5c9f8); }
.drop path { fill: none; stroke: #4d6185; stroke-width: 2; }
.combo.layer { width: 299px; margin: 0 0 0 1px; padding-left: 2px; }
.layer .icon { margin-right: 1px; }
.layer .sw { margin-left: -2px; margin-right: -2px; }
.c1 { width: 150px; }
.c1 .icon { margin-left: 2px; margin-right: -4px; }
.c1 select { padding-left: 5px; }
.c2 { width: 160px; }
.c3 { width: 125px; }
.combo.c4 { width: 120px; margin-right: 0; }
.c4 select { padding-left: 8px; }
.ltype { width: 60px; height: 1px; background: #000; margin: 0 2px 0 4px; }
.ltype.short { width: 35px; }
.off { background: #ece9d8; border-color: #c9c7ba; }
.combo.off select { color: #aca899; }
.off .drop { background: #ebe9df; }
.off .drop path { stroke: #c5c2b4; }

main { flex: 1; min-height: 0; display: flex; overflow: hidden; border-top: 1px solid #aca899; }
.vcol { flex: none; width: 26px; }
.vcol.right:last-child { width: 24px; }
.vcol.right:last-child .vbar { width: 24px; padding: 0 0 4px; border-right-width: 1px; }
.vbar { width: 25px; padding: 0 1px 4px; border: solid #a5a292; border-width: 0 2px 2px 0; margin-bottom: 1px; }
.vgrip { height: 10px; padding: 1px 2px 0; }
.vgrip::before { content: ""; display: block; height: 6px; width: 18px; border: solid #fff; border-width: 1px 0; box-shadow: 0 1px #aca899, inset 0 1px #aca899; }
.vtool { width: 22px; height: 22px; }
.vsep { width: 18px; height: 1px; margin: 2px 2px 3px; background: #b8b5a5; }

.work { flex: 1; min-width: 0; display: flex; flex-direction: column; margin-right: 4px; border-left: 1px solid #716f64; }
.view { flex: 1; min-height: 0; display: flex; background: #000; }
.drawing { flex: 1; min-width: 0; height: 100%; display: block; }
.dimtext { fill: #35e035; stroke: #35e035; stroke-width: .3px; font: 100 28px "Roboto", "Open Sans", sans-serif; }
.axis { fill: #fff; stroke: #fff; stroke-width: .3px; font: 100 19px "Roboto", "Open Sans", sans-serif; }
.vscroll { width: 17px; flex: none; display: flex; flex-direction: column; justify-content: space-between; align-items: center; background: #f8f8f4; }
.vscroll button, .hscroll button { width: 15px; height: 16px; flex: none; border: 1px solid #9cb4e8; border-radius: 2px; background: linear-gradient(135deg, #dfe8ff, #b5c9f8); }
.vscroll svg, .hscroll svg { width: 16px; height: 14px; flex: none; fill: none; stroke: #4d6185; stroke-width: 2; }
.vscroll .thumb { width: 15px; height: 17px; margin-bottom: 68px; border: 1px solid #9cb4e8; border-radius: 2px; background: repeating-linear-gradient(#c6d6fb 0 1px, #eef3ff 1px 2px); }
.tabrow { flex: none; height: 17px; display: flex; align-items: center; }
.nav { width: 18px; height: 15px; border: solid #c5c2b4; border-width: 0 1px 1px 0; }
.nav svg { width: 16px; height: 14px; }
.tabs { display: flex; margin-left: 4px; height: 17px; }
.tab { display: grid; width: 42px; height: 16px; font-family: "Noto Sans CJK SC", sans-serif; line-height: 15px; }
.tab > * { grid-area: 1 / 1; }
.tab svg { width: 100%; height: 15px; fill: none; stroke: #000; overflow: visible; }
.tab.on { width: 38px; color: #fff; }
.tab.on svg { fill: #000; }
.hscroll { margin-left: auto; width: 33%; display: flex; align-items: center; height: 15px; margin-right: 17px; background: #f8f8f4; }
.hscroll button, .hscroll .thumb { height: 14px; width: 16px; }
.hscroll .split { width: 5px; height: 12px; border: 1px solid #aca899; background: #ece9d8; margin-right: 1px; }
.hscroll .thumb { border: 1px solid #9cb4e8; border-radius: 2px; background: repeating-linear-gradient(90deg, #b5c9f8 0 1px, #eef3ff 1px 3px); margin-left: 1px; }
.space { flex: 1; }

.command { flex: none; height: 44px; display: flex; border-top: 1px solid #fff; padding: 9px 25px 4px 5px; border-bottom: 1px solid #aca899; background: linear-gradient(#000, #000) 0 4px / 100% 1px no-repeat; }
.command .grip { height: 26px; margin: 2px 5px 0 1px; }
.cmdbox { flex: 1; display: flex; align-items: flex-end; height: 30px; padding-left: 2px; background: #fff; border: solid #000; border-width: 1px 0 0 1px; }
.cmdbox label { font: 12px/14px "Noto Sans CJK SC", sans-serif; }
.cmdbox input { flex: 1; min-width: 0; border: 0; padding: 0; height: 16px; outline: 0; font: 10px/16px "DejaVu Sans Mono", monospace; }

.status { flex: none; height: 22px; display: flex; align-items: center; padding: 1px 2px 0 5px; gap: 4px; border-top: 1px solid #fff; font-family: "Noto Sans CJK SC", sans-serif; }
.coords { width: 250px; height: 18px; padding-left: 1px; border: 1px solid #aca899; border-right-color: #fff; border-bottom-color: #fff; color: #aca899; line-height: 16px; }
.status > button { height: 18px; padding: 0 1px; border: 1px solid #fff; border-right-color: #aca899; border-bottom-color: #aca899; flex: none; }
.status > .down { border-color: #000 #fff #fff #000; }
.notify { margin-left: auto; display: flex; gap: 4px; height: 18px; padding: 0 5px 0 3px; border: 1px solid #aca899; border-color: #aca899 #fff #fff #aca899; }
.status > .caret { border: 0; }
.status > .caret::before { border-width: 4px 4px 0; }

.taskbar { flex: none; height: 30px; display: flex; align-items: center; color: #fff; font-family: "Noto Sans CJK SC", sans-serif; background: linear-gradient(#2a5fc8 0, #3f87f2 2px, #2560dc 6px, #245edb 24px, #1a46b0 30px); }
.start { width: 96px; height: 30px; padding-right: 10px; gap: 7px; border-radius: 0 12px 12px 0; background: linear-gradient(#57a052 0, #6fc268 3px, #3d973d 8px, #369236 22px, #246a24 30px); box-shadow: 1px 0 2px #123; }
.start em { font: italic 18px/26px "Noto Sans CJK SC", sans-serif; text-shadow: 1px 1px 1px #143c14; }
.flag { width: 18px; height: 18px; }
.quick { display: flex; gap: 7px; width: 72px; padding-left: 13px; }
.task { width: 159px; height: 24px; margin-right: 2px; justify-content: flex-start; gap: 4px; padding-left: 9px; white-space: nowrap; border-radius: 2px; background: linear-gradient(#5a9cff, #3c81f0 4px, #3a7cee); }
.task.active { background: linear-gradient(#153a94, #1e50b8 4px, #1d52c0); padding-left: 11px; }
.ime { margin-left: auto; display: flex; align-items: center; gap: 4px; padding-right: 16px; }
.ime .ying { font-size: 16px; }
.ime button { width: 17px; }
.tray { height: 30px; width: 78px; flex: none; display: flex; align-items: center; gap: 2px; background: linear-gradient(#0c84cc 0, #28b0f5 2px, #1290e8 6px, #1290e8 24px, #0d6cc0 30px); border-left: 1px solid #0a50a8; }
.chev { width: 18px; height: 18px; margin-left: -10px; border-radius: 9px; background: radial-gradient(#4aa8f8, #1768d0); border: 1px solid #9cd0ff; }
.chev svg { width: 18px; height: 18px; flex: none; fill: none; stroke: #fff; stroke-width: 2; }
.tray time { margin-left: 6px; font: 10px/16px "DejaVu Sans Mono", monospace; }
</style>
